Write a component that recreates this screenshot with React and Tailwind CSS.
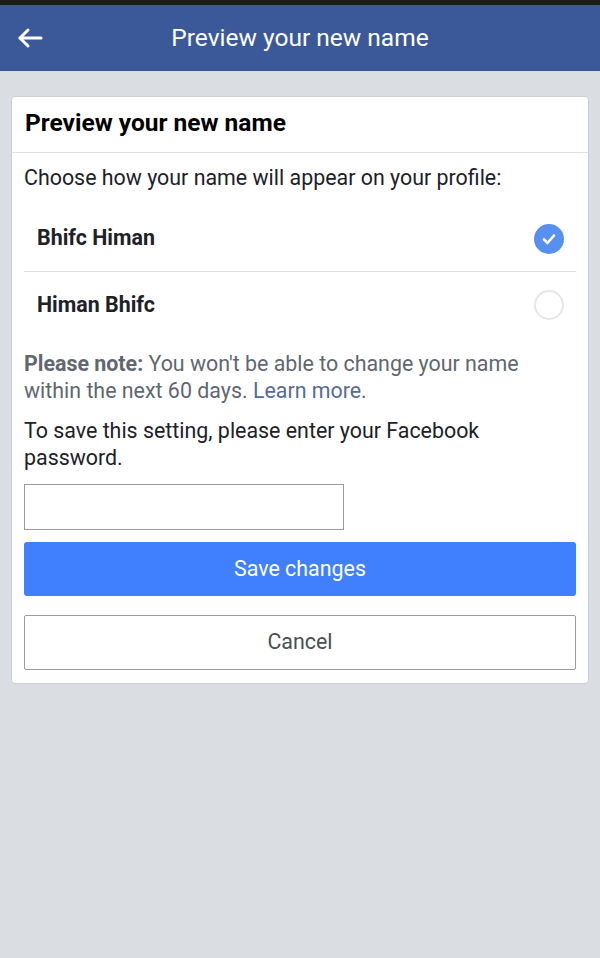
import { useState } from "react";

const names = ["Bhifc Himan", "Himan Bhifc"];

export default function App() {
  const [selected, setSelected] = useState(0);

  return (
    <div className="min-h-[958px] bg-[#dadde1] font-['Roboto',sans-serif]">
      <div className="h-[5px] bg-[#1c1c1c]" />
      <header className="relative flex h-[66px] items-center justify-center bg-[#3b5998]">
        <button className="absolute left-[16px] top-[22px] text-white" aria-label="Back">
          <svg width="28" height="22" viewBox="0 0 28 22" fill="none" stroke="currentColor" strokeWidth="3" strokeLinecap="round" strokeLinejoin="round">
            <line x1="4" y1="11" x2="25" y2="11" />
            <polyline points="12,3 4,11 12,19" />
          </svg>
        </button>
        <h1 className="text-[24.5px] text-white">Preview your new name</h1>
      </header>

      <div className="px-[11px] pt-[25px]">
        <div className="rounded-[4px] border border-[#ccd0d5] bg-white">
          <div className="border-b border-[#dddfe2] px-[13px] pt-[11px] pb-[14px]">
            <h2 className="text-[24.5px] font-bold leading-[30px] text-black">Preview your new name</h2>
          </div>

          <div className="px-[12px] pb-[13px]">
            <p className="pt-[11px] text-[21.4px] leading-[27px] text-[#1d2129]">
              Choose how your name will appear on your profile:
            </p>

            <div className="mt-[15px]">
              {names.map((name, i) => (
                <button
                  key={name}
                  onClick={() => setSelected(i)}
                  className={`flex h-[66px] w-full items-center justify-between pl-[13px] pr-[12px] ${
                    i === 0 ? "border-b border-[#dddfe2]" : ""
                  }`}
                >
                  <span className="text-[21.4px] font-bold text-[#1d2129]">{name}</span>
                  {selected === i ? (
                    <span className="flex h-[30px] w-[30px] items-center justify-center rounded-full bg-[#5890f0]">
                      <svg width="16" height="16" viewBox="0 0 16 16" fill="none" stroke="white" strokeWidth="2.6" strokeLinecap="round" strokeLinejoin="round">
                        <polyline points="3,8.5 6.5,12 13,4.5" />
                      </svg>
                    </span>
                  ) : (
                    <span className="h-[30px] w-[30px] rounded-full border-2 border-[#e4e6e9]" />
                  )}
                </button>
              ))}
            </div>

            <p className="mt-[12px] text-[21.4px] leading-[27px] text-[#606770]">
              <span className="font-bold">Please note:</span> You won't be able to change your name within the next 60 days.{" "}
              <a className="text-[#576b95]">Learn more</a>.
            </p>

            <p className="mt-[13px] text-[21.4px] leading-[27px] text-[#1d2129]">
              To save this setting, please enter your Facebook password.
            </p>

            <input
              type="password"
              className="mt-[13px] block h-[46px] w-[320px] border border-[#9a9a9a] bg-white px-2 outline-none"
            />

            <button className="mt-[12px] flex h-[54px] w-full items-center justify-center rounded-[3px] bg-[#4080ff] text-[21.4px] text-white">
              Save changes
            </button>

            <button className="mt-[19px] flex h-[55px] w-full items-center justify-center rounded-[2px] border border-[#9a9a9a] bg-white text-[21.4px] text-[#4b4f56]">
              Cancel
            </button>
          </div>
        </div>
      </div>
    </div>
  );
}
